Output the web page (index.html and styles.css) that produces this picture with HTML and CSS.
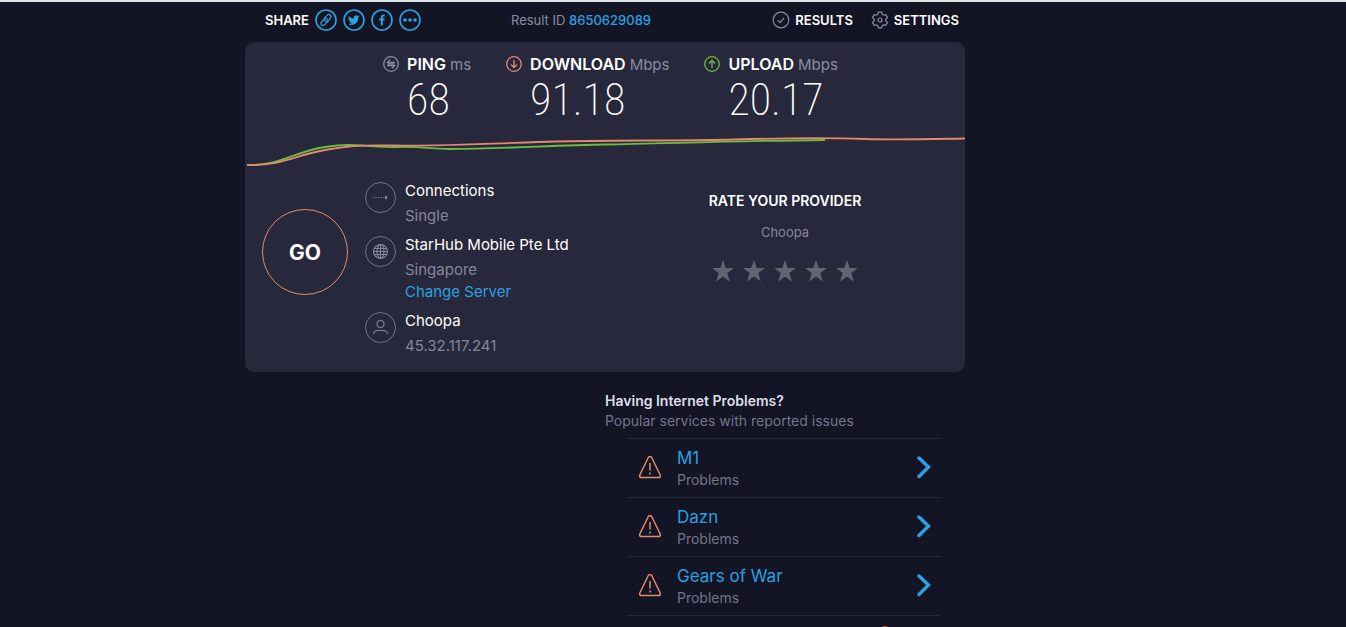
FILE: index.html
```html
<!DOCTYPE html>
<html lang="en">
<head>
    <meta charset="UTF-8">
    <meta name="viewport" content="width=device-width, initial-scale=1.0">
    <title>Speed Test Result</title>
    <link rel="stylesheet" href="styles.css">
</head>
<body>
    <div class="container">
        <!-- Top bar -->
        <header class="topbar">
            <div class="share">
                <span>SHARE</span>
                <a href="#" aria-label="Copy link">
                    <svg viewBox="0 0 22 22"><circle cx="11" cy="11" r="10"/><g class="thin" transform="rotate(-50 11 11)"><rect x="4.5" y="8.8" width="8" height="4.4" rx="2.2"/><rect x="9.5" y="8.8" width="8" height="4.4" rx="2.2"/></g></svg>
                </a>
                <a href="#" aria-label="Twitter">
                    <svg viewBox="0 0 22 22"><circle cx="11" cy="11" r="10"/><path class="solid" d="M16.6 7.4l-1.3.4c.5-.3.8-.7 1-1.2l-1.5.6a2.4 2.4 0 0 0-4.1 2.2c-2-.1-3.7-1-4.9-2.5-.7 1.2-.3 2.5.7 3.2l-1-.3c0 1.2.8 2.1 1.9 2.4l-1 .1c.3.9 1.2 1.6 2.2 1.6-1 .8-2.1 1.1-3.4 1 4.8 2.8 10.2-.4 10.1-6.3.5-.3.9-.7 1.3-1.2z"/></svg>
                </a>
                <a href="#" aria-label="Facebook">
                    <svg viewBox="0 0 22 22"><circle cx="11" cy="11" r="10"/><path class="solid" d="M9.8 16.5v-5H8.2V9.5h1.6V8.2c0-1.7 1-2.6 2.5-2.6h1.4v1.9h-1c-.7 0-.9.3-.9.9v1.1h1.9l-.3 2h-1.6v5z"/></svg>
                </a>
                <a href="#" aria-label="More">
                    <svg viewBox="0 0 22 22"><circle cx="11" cy="11" r="10"/><g class="solid"><circle cx="6" cy="11" r="1.8"/><circle cx="11" cy="11" r="1.8"/><circle cx="16" cy="11" r="1.8"/></g></svg>
                </a>
            </div>
            <div class="result-id">Result ID <a href="#">8650629089</a></div>
            <nav class="menu">
                <a href="#">
                    <svg viewBox="0 0 18 18"><circle cx="9" cy="9" r="7.8"/><path d="M5.8 9.2l2.2 2.3 4.2-4.6"/></svg>
                    RESULTS
                </a>
                <a href="#">
                    <svg viewBox="0 0 18 18"><circle cx="9" cy="9" r="2"/><path d="M7.3 1.2h3.4l.6 2.2 1.3.8 2.2-.6 1.7 2.9-1.6 1.6v1.8l1.6 1.6-1.7 2.9-2.2-.6-1.3.8-.6 2.2H7.3l-.6-2.2-1.3-.8-2.2.6-1.7-2.9 1.6-1.6V8.1L1.5 6.5l1.7-2.9 2.2.6 1.3-.8z"/></svg>
                    SETTINGS
                </a>
            </nav>
        </header>

        <!-- Result card -->
        <main class="card">
            <div class="stats">
                <div class="stat">
                    <svg class="ping" viewBox="0 0 16 16"><circle cx="8" cy="8" r="7.3"/><path d="M12 6.4H4.5L7.2 3.8M4.6 8h6.8M4 9.6h7.5L8.8 12.2"/></svg>
                    <h2>PING <span>ms</span></h2>
                    <p class="value">68</p>
                </div>
                <div class="stat">
                    <svg class="download" viewBox="0 0 16 16"><circle cx="8" cy="8" r="7.3"/><path d="M8 4v7.5M5 8.5l3 3 3-3"/></svg>
                    <h2>DOWNLOAD <span>Mbps</span></h2>
                    <p class="value">91.18</p>
                </div>
                <div class="stat">
                    <svg class="upload" viewBox="0 0 16 16"><circle cx="8" cy="8" r="7.3"/><path d="M8 12V4.5M5 7.5l3-3 3 3"/></svg>
                    <h2>UPLOAD <span>Mbps</span></h2>
                    <p class="value">20.17</p>
                </div>
            </div>

            <svg class="graph" viewBox="0 0 720 40" preserveAspectRatio="none">
                <path class="upload" d="M2 35C35 36 48 22 80 17S120 18 150 17S180 19 205 19C260 19 310 15 360 14.5S480 11 580 10"/>
                <path class="download" d="M2 35C38 36 50 25 80 20S125 15 150 15.5C200 16 260 13 310 11.5S440 11 490 9.5S590 8 620 9S690 9 720 8.5"/>
            </svg>

            <div class="details">
                <button class="go" type="button">GO</button>
                <ul class="info">
                    <li>
                        <svg viewBox="0 0 31 31"><circle cx="15.5" cy="15.5" r="15"/><path stroke-dasharray="1.5 1" d="M8 15.5h12"/><path class="solid" d="M20 13.2l3 2.3-3 2.3z"/></svg>
                        <div>
                            <h3>Connections</h3>
                            <p>Single</p>
                        </div>
                    </li>
                    <li>
                        <svg viewBox="0 0 31 31"><circle cx="15.5" cy="15.5" r="15"/><g class="glyph"><circle cx="15.5" cy="15.5" r="7"/><ellipse cx="15.5" cy="15.5" rx="3.5" ry="7"/><path d="M15.5 8.5v14M9.5 12.5h12M8.5 15.5h14M9.5 18.5h12"/></g></svg>
                        <div>
                            <h3>StarHub Mobile Pte Ltd</h3>
                            <p>Singapore</p>
                            <a href="#">Change Server</a>
                        </div>
                    </li>
                    <li>
                        <svg viewBox="0 0 31 31"><circle cx="15.5" cy="15.5" r="15"/><g class="glyph"><circle cx="15.5" cy="12" r="3.5"/><path d="M8.5 22c0-5 14-5 14 0"/></g></svg>
                        <div>
                            <h3>Choopa</h3>
                            <p>45.32.117.241</p>
                        </div>
                    </li>
                </ul>
                <div class="rate">
                    <h3>RATE YOUR PROVIDER</h3>
                    <p>Choopa</p>
                    <div class="stars">
                        <button type="button" aria-label="1 star"><svg viewBox="0 0 22 22"><path d="M11 0l2.7 8H22l-6.7 5 2.5 8.5L11 16.5l-6.8 5L6.7 13 0 8h8.3z"/></svg></button>
                        <button type="button" aria-label="2 stars"><svg viewBox="0 0 22 22"><path d="M11 0l2.7 8H22l-6.7 5 2.5 8.5L11 16.5l-6.8 5L6.7 13 0 8h8.3z"/></svg></button>
                        <button type="button" aria-label="3 stars"><svg viewBox="0 0 22 22"><path d="M11 0l2.7 8H22l-6.7 5 2.5 8.5L11 16.5l-6.8 5L6.7 13 0 8h8.3z"/></svg></button>
                        <button type="button" aria-label="4 stars"><svg viewBox="0 0 22 22"><path d="M11 0l2.7 8H22l-6.7 5 2.5 8.5L11 16.5l-6.8 5L6.7 13 0 8h8.3z"/></svg></button>
                        <button type="button" aria-label="5 stars"><svg viewBox="0 0 22 22"><path d="M11 0l2.7 8H22l-6.7 5 2.5 8.5L11 16.5l-6.8 5L6.7 13 0 8h8.3z"/></svg></button>
                    </div>
                </div>
            </div>
        </main>

        <!-- Reported problems -->
        <section class="problems">
            <h3>Having Internet Problems?</h3>
            <p>Popular services with reported issues</p>
            <ul>
                <li>
                    <svg class="warning" viewBox="0 0 24 24"><path d="M10.3 1.5a2 2 0 0 1 3.4 0l8.5 17.5a1.8 1.8 0 0 1-1.6 2.6H3.4A1.8 1.8 0 0 1 1.8 19zM12 7v7.5M12 16.5v2"/></svg>
                    <div>
                        <a href="#">M1</a>
                        <p>Problems</p>
                    </div>
                    <svg class="chevron" viewBox="0 0 14 24"><path d="M2 2l9.5 9L2 20.5"/></svg>
                </li>
                <li>
                    <svg class="warning" viewBox="0 0 24 24"><path d="M10.3 1.5a2 2 0 0 1 3.4 0l8.5 17.5a1.8 1.8 0 0 1-1.6 2.6H3.4A1.8 1.8 0 0 1 1.8 19zM12 7v7.5M12 16.5v2"/></svg>
                    <div>
                        <a href="#">Dazn</a>
                        <p>Problems</p>
                    </div>
                    <svg class="chevron" viewBox="0 0 14 24"><path d="M2 2l9.5 9L2 20.5"/></svg>
                </li>
                <li>
                    <svg class="warning" viewBox="0 0 24 24"><path d="M10.3 1.5a2 2 0 0 1 3.4 0l8.5 17.5a1.8 1.8 0 0 1-1.6 2.6H3.4A1.8 1.8 0 0 1 1.8 19zM12 7v7.5M12 16.5v2"/></svg>
                    <div>
                        <a href="#">Gears of War</a>
                        <p>Problems</p>
                    </div>
                    <svg class="chevron" viewBox="0 0 14 24"><path d="M2 2l9.5 9L2 20.5"/></svg>
                </li>
            </ul>
            <div class="more"><span class="dot"></span></div>
        </section>
    </div>
</body>
</html>
```
FILE: styles.css
```css
* {
    box-sizing: border-box;
}
html {
    height: 100%;
}
body {
    height: 100%;
    margin: 0;
    padding-right: 136px;
    overflow: hidden;
    border-top: 2px solid #dfe3ea;
    background: #131424;
    color: #fff;
    font-family: Inter, "Liberation Sans", sans-serif;
    font-size: 15px;
}
h2, h3, p, ul {
    margin: 0;
    padding: 0;
    list-style: none;
}
a {
    color: #2ba1e0;
    text-decoration: none;
}
svg {
    display: block;
    fill: none;
    stroke: currentColor;
    flex-shrink: 0;
}
button {
    padding: 0;
    border: none;
    background: none;
    color: inherit;
    font-family: inherit;
    cursor: pointer;
}
.solid {
    fill: currentColor;
    stroke: none;
}
.container {
    max-width: 720px;
    margin: 0 auto;
}

/* top bar */
.topbar {
    display: flex;
    align-items: center;
    height: 40px;
    padding: 0 6px 4px 20px;
    font-size: 13px;
}
.share {
    display: flex;
    align-items: center;
    gap: 6px;
    font-weight: 600;
}
.share svg {
    width: 22px;
    height: 22px;
    stroke-width: 1.6;
}
.share .thin {
    stroke-width: 1.2;
}
.result-id {
    margin-left: 90px;
    color: #8a8ba2;
}
.result-id a {
    font-weight: 500;
}
.menu {
    display: flex;
    gap: 18px;
    margin-left: auto;
}
.menu a {
    display: flex;
    align-items: center;
    gap: 5px;
    color: #fff;
    font-weight: 600;
}
.menu svg {
    width: 18px;
    height: 18px;
    color: #8a8ba2;
    stroke-width: 1.2;
}

/* result card */
.card {
    padding: 10px 0 15px;
    border-radius: 9px;
    background: #27283b;
}
.stats {
    display: flex;
    justify-content: center;
    gap: 35px;
    padding-left: 11px;
}
.stat {
    display: grid;
    grid-template-columns: 16px auto;
    column-gap: 8px;
    align-items: center;
}
.stat h2 {
    font-size: 16px;
    font-weight: 600;
    line-height: 24px;
}
.stat h2 span {
    color: #8a8ba2;
    font-size: 15px;
    font-weight: 400;
    line-height: 1;
}
.stat svg {
    width: 16px;
    height: 16px;
    stroke-width: 1.3;
}
.value {
    grid-column: 2;
    font-family: "Roboto Condensed", Roboto, sans-serif;
    font-size: 44px;
    font-weight: 200;
    line-height: 48px;
}
.ping {
    color: #8a8ba2;
}
.download {
    color: #e38a6d;
}
.upload {
    color: #6dbb3f;
}
.graph {
    width: 100%;
    height: 40px;
    margin: 6px 0 7px;
    stroke-width: 1.8;
}
.details {
    display: grid;
    grid-template-columns: 120px 1fr 50%;
}
.go {
    width: 86px;
    height: 86px;
    margin: 32px 0 0 17px;
    border: 1px solid #e38a6d;
    border-radius: 50%;
    font-size: 21px;
    font-weight: 700;
}
.info {
    display: grid;
    gap: 4px;
    color: #85869c;
    line-height: 22px;
}
.info li {
    display: flex;
    gap: 9px;
}
.info svg {
    width: 31px;
    height: 31px;
    margin-top: 5px;
    stroke-width: 0.8;
}
.info .glyph {
    stroke-width: 1.1;
}
.info h3 {
    color: #fff;
    font-size: 15px;
    font-weight: 400;
    line-height: 28px;
}
.info a {
    display: block;
}
.rate {
    padding-top: 14px;
    text-align: center;
    font-size: 13px;
}
.rate h3 {
    font-size: 14px;
    font-weight: 600;
    line-height: 20px;
}
.rate p {
    margin: 11px 0 18px;
    color: #85869c;
    line-height: 20px;
}
.stars {
    display: flex;
    justify-content: center;
    gap: 9px;
}
.stars svg {
    width: 22px;
    height: 22px;
    fill: #626472;
    stroke: none;
}

/* reported problems */
.problems {
    width: 50%;
    margin-left: auto;
    padding-top: 19px;
    color: #74758a;
    font-size: 14px;
    line-height: 20px;
}
.problems h3 {
    color: #dddee8;
    font-size: 14px;
    font-weight: 600;
}
.problems ul {
    margin: 7px 24px 0 23px;
    border-bottom: 1px solid #27283b;
}
.problems li {
    display: flex;
    align-items: center;
    gap: 15px;
    height: 59px;
    padding: 0 10px;
    border-top: 1px solid #27283b;
}
.problems li div {
    flex: 1;
}
.problems li a {
    font-size: 17px;
    line-height: 24px;
}
.warning {
    width: 24px;
    height: 24px;
    color: #e38a6d;
    stroke-width: 1.5;
}
.chevron {
    width: 14px;
    height: 24px;
    color: #2ba1e0;
    stroke-width: 3.5;
    stroke-linecap: round;
}
.more {
    display: flex;
    justify-content: flex-end;
    padding: 10px 76px 0 0;
}
.dot {
    width: 8px;
    height: 8px;
    border-radius: 50%;
    background: #c8503f;
}
```
